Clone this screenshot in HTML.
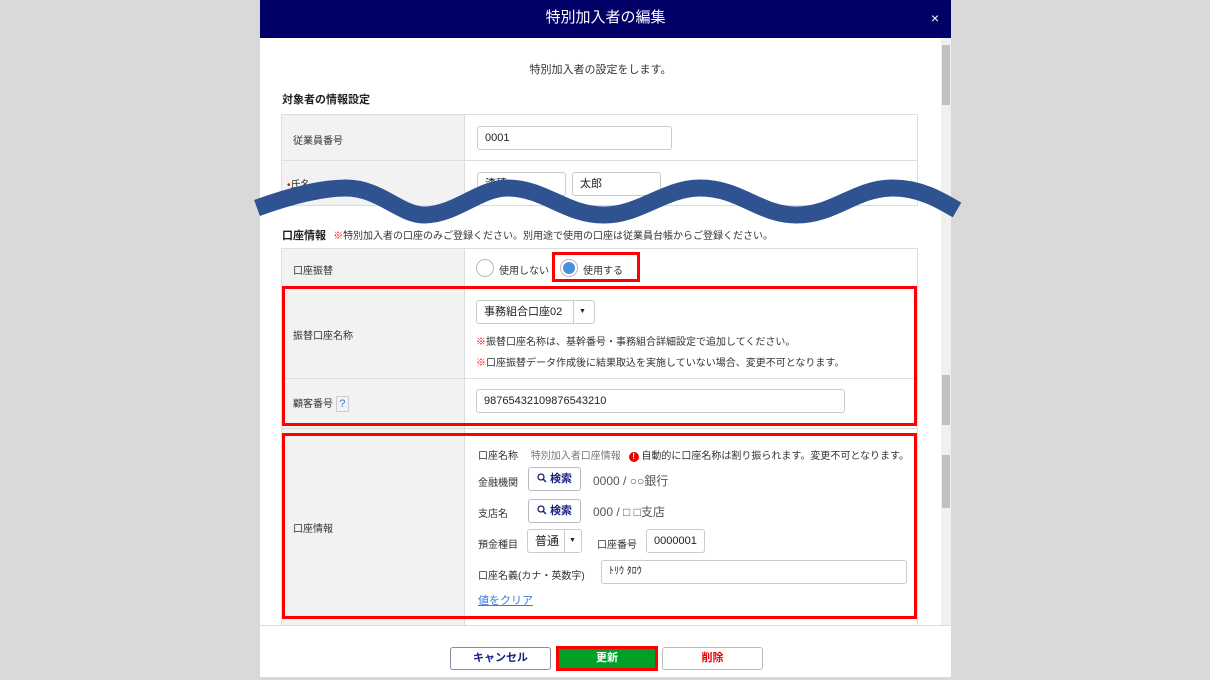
<!DOCTYPE html>
<html><head><meta charset="utf-8"><style>
*{margin:0;padding:0;box-sizing:border-box}
body{width:1210px;height:680px;background:#d9d9d9;position:relative;overflow:hidden;font-family:"Liberation Sans","Noto Sans CJK JP",sans-serif;font-size:10px;color:#333}
.a{position:absolute}
.modal{left:260px;top:0;width:691px;height:680px;background:#fff}
.hdr{left:260px;top:0;width:691px;height:38px;background:#000066;color:#fff;font-size:15px;text-align:center;line-height:36px}
.lab{background:#f2f2f2;border-right:1px solid #ddd}
.bd{border:1px solid #ddd}
.inp{border:1px solid #ccc;border-radius:3px;background:#fff;padding-left:7px;font-size:11px;color:#222}
.red{border:3px solid #f00}
.note{font-size:10px;color:#333}
.rm{color:#f00;font-weight:bold}
.btn{border:1px solid #bbb;border-radius:3px;background:#fff;text-align:center;font-weight:bold;font-size:11px}
</style></head><body>
<div class="a modal"></div>
<div class="a hdr">特別加入者の編集<span style="position:absolute;right:12px;top:0;font-size:14px">×</span></div>
<div class="a" style="left:941px;top:38px;width:10px;height:587px;background:#f0f0f0"></div>
<div class="a" style="left:942px;top:45px;width:8px;height:60px;background:#c1c1c1"></div>
<div class="a" style="left:942px;top:375px;width:8px;height:50px;background:#c1c1c1"></div>
<div class="a" style="left:942px;top:455px;width:8px;height:53px;background:#c1c1c1"></div>

<div class="a" style="left:260px;top:61px;width:681px;text-align:center;font-size:11px">特別加入者の設定をします。</div>
<div class="a" style="left:282px;top:91px;font-weight:bold;font-size:11px;color:#222">対象者の情報設定</div>

<div class="a bd" style="left:281px;top:114px;width:637px;height:92px"></div>
<div class="a lab" style="left:282px;top:115px;width:183px;height:90px"></div>
<div class="a" style="left:282px;top:160px;width:636px;height:1px;background:#ddd"></div>
<div class="a" style="left:293px;top:132px">従業員番号</div>
<div class="a inp" style="left:477px;top:126px;width:195px;height:24px;line-height:22px">0001</div>
<div class="a" style="left:287px;top:176px"><span style="color:#f00">•</span>氏名</div>
<div class="a inp" style="left:477px;top:172px;width:89px;height:24px;line-height:22px">漆積</div>
<div class="a inp" style="left:572px;top:172px;width:89px;height:24px;line-height:22px">太郎</div>

<div class="a" style="left:260px;top:206px;width:681px;height:16px;background:#fff"></div>
<svg class="a" style="left:240px;top:160px" width="740" height="80" viewBox="0 0 740 80">
<path d="M17 48 C50 36,80 28,106 28 C140 28,160 55,184 55 C215 55,240 28,267 28 C305 28,325 55,364 55 C400 55,425 28,460 28 C500 28,520 55,556 55 C595 55,615 28,653 28 C680 28,700 40,717 50" fill="none" stroke="#2f5391" stroke-width="17"/>
</svg>

<div class="a" style="left:282px;top:227px;font-weight:bold;font-size:11px;color:#222">口座情報 <span class="note" style="font-weight:normal;margin-left:4px"><span class="rm">※</span>特別加入者の口座のみご登録ください。別用途で使用の口座は従業員台帳からご登録ください。</span></div>

<div class="a bd" style="left:281px;top:248px;width:637px;height:378px"></div>
<div class="a lab" style="left:282px;top:249px;width:183px;height:376px"></div>
<div class="a" style="left:282px;top:287px;width:636px;height:1px;background:#ddd"></div>
<div class="a" style="left:282px;top:378px;width:636px;height:1px;background:#ddd"></div>
<div class="a" style="left:282px;top:428px;width:636px;height:1px;background:#ddd"></div>

<div class="a" style="left:293px;top:262px">口座振替</div>
<div class="a" style="left:476px;top:259px;width:18px;height:18px;border:1px solid #bbb;border-radius:50%;background:#fff"></div>
<div class="a" style="left:499px;top:262px;font-size:10px">使用しない</div>
<div class="a red" style="left:552px;top:252px;width:88px;height:30px"></div>
<div class="a" style="left:560px;top:259px;width:18px;height:18px;border:1px solid #bbb;border-radius:50%;background:#fff"></div>
<div class="a" style="left:563px;top:262px;width:12px;height:12px;border-radius:50%;background:#4a90e2"></div>
<div class="a" style="left:583px;top:262px;font-size:10px">使用する</div>

<div class="a red" style="left:282px;top:286px;width:635px;height:140px"></div>
<div class="a" style="left:293px;top:327px">振替口座名称</div>
<div class="a inp" style="left:476px;top:300px;width:119px;height:24px;line-height:22px;font-size:11px">事務組合口座02<span style="position:absolute;left:96px;top:0;width:1px;height:22px;background:#ccc"></span><span style="position:absolute;left:102px;top:0;font-size:7px">▼</span></div>
<div class="a note" style="left:476px;top:333px"><span class="rm">※</span>振替口座名称は、基幹番号・事務組合詳細設定で追加してください。</div>
<div class="a note" style="left:476px;top:354px"><span class="rm">※</span>口座振替データ作成後に結果取込を実施していない場合、変更不可となります。</div>
<div class="a" style="left:293px;top:395px">顧客番号 <span style="display:inline-block;width:13px;height:16px;border:1px solid #ccc;color:#3a7bd5;text-align:center;font-size:11px;line-height:14px;vertical-align:middle">?</span></div>
<div class="a inp" style="left:476px;top:389px;width:369px;height:24px;line-height:22px">98765432109876543210</div>

<div class="a red" style="left:282px;top:433px;width:635px;height:186px"></div>
<div class="a" style="left:293px;top:520px">口座情報</div>
<div class="a" style="left:478px;top:447px;font-size:10px">口座名称 <span style="color:#777;margin-left:10px">特別加入者口座情報</span> <span style="display:inline-block;width:10px;height:10px;border-radius:50%;background:#e00;color:#fff;font-size:8px;text-align:center;line-height:10px;font-weight:bold;margin-left:5px">!</span> 自動的に口座名称は割り振られます。変更不可となります。</div>
<div class="a" style="left:478px;top:474px;font-size:10px">金融機関</div>
<div class="a btn" style="left:528px;top:467px;width:53px;height:24px;line-height:22px;color:#1a237e"><svg width="10" height="10" viewBox="0 0 10 10" style="vertical-align:-1px;margin-right:3px"><circle cx="4" cy="4" r="3" fill="none" stroke="#1a237e" stroke-width="1.3"/><path d="M6.2 6.2L9 9" stroke="#1a237e" stroke-width="1.5"/></svg>検索</div>
<div class="a" style="left:593px;top:472px;font-size:12px;color:#555">0000 / ○○銀行</div>
<div class="a" style="left:478px;top:505px;font-size:10px">支店名</div>
<div class="a btn" style="left:528px;top:499px;width:53px;height:24px;line-height:22px;color:#1a237e"><svg width="10" height="10" viewBox="0 0 10 10" style="vertical-align:-1px;margin-right:3px"><circle cx="4" cy="4" r="3" fill="none" stroke="#1a237e" stroke-width="1.3"/><path d="M6.2 6.2L9 9" stroke="#1a237e" stroke-width="1.5"/></svg>検索</div>
<div class="a" style="left:593px;top:503px;font-size:12px;color:#555">000 / □ □支店</div>
<div class="a" style="left:478px;top:536px;font-size:10px">預金種目</div>
<div class="a inp" style="left:527px;top:529px;width:55px;height:24px;line-height:22px;font-size:12px">普通<span style="position:absolute;left:36px;top:0;width:1px;height:22px;background:#ccc"></span><span style="position:absolute;left:41px;top:0;font-size:7px">▼</span></div>
<div class="a" style="left:597px;top:536px;font-size:10px">口座番号</div>
<div class="a inp" style="left:646px;top:529px;width:59px;height:24px;line-height:22px">0000001</div>
<div class="a" style="left:478px;top:567px;font-size:10px">口座名義(カナ・英数字)</div>
<div class="a inp" style="left:601px;top:560px;width:306px;height:24px;line-height:22px;font-size:10px">ﾄﾘｳ ﾀﾛｳ</div>
<div class="a" style="left:478px;top:592px;font-size:11px;color:#3a7bd5;text-decoration:underline">値をクリア</div>

<div class="a" style="left:260px;top:625px;width:691px;height:1px;background:#ddd"></div>
<div class="a btn" style="left:450px;top:647px;width:101px;height:23px;line-height:21px;border-color:#8888aa;color:#1a237e">キャンセル</div>
<div class="a" style="left:556px;top:646px;width:102px;height:25px;border:3px solid #f00;background:#00a028;color:#fff;font-weight:bold;font-size:11px;text-align:center;line-height:19px">更新</div>
<div class="a btn" style="left:662px;top:647px;width:101px;height:23px;line-height:21px;color:#e00">削除</div>
<div class="a" style="left:260px;top:677px;width:691px;height:3px;background:#d9d9d9"></div>
</body></html>
